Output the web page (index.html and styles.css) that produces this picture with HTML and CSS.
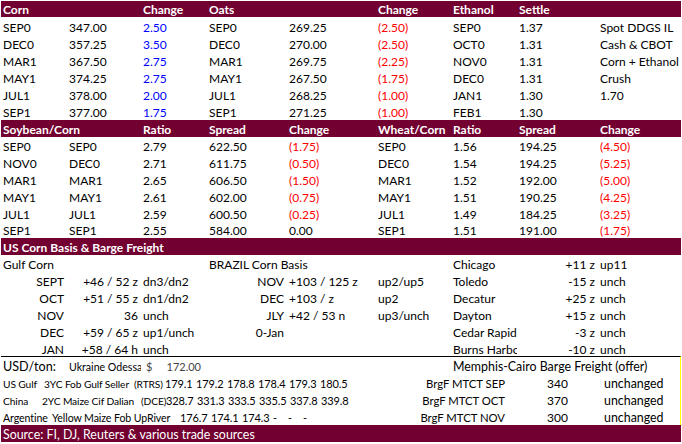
FILE: index.html
```html
<!DOCTYPE html>
<html lang="en">
<head>
<meta charset="utf-8">
<title>Grain market summary</title>
<link rel="stylesheet" href="styles.css">
</head>
<body>
<main class="sheet">
  <div class="row band first"><span class="c1">Corn</span><span class="c3">Change</span><span class="c4">Oats</span><span class="c6">Change</span><span class="c7">Ethanol</span><span class="c8">Settle</span></div>
  <div class="row tall"><span class="c1">SEP0</span><span class="c2">347.00</span><span class="c3 up">2.50</span><span class="c4">SEP0</span><span class="c5">269.25</span><span class="c6 down">(2.50)</span><span class="c7">SEP0</span><span class="c8">1.37</span><span class="c9">Spot DDGS IL</span></div>
  <div class="row"><span class="c1">DEC0</span><span class="c2">357.25</span><span class="c3 up">3.50</span><span class="c4">DEC0</span><span class="c5">270.00</span><span class="c6 down">(2.50)</span><span class="c7">OCT0</span><span class="c8">1.31</span><span class="c9">Cash &amp; CBOT</span></div>
  <div class="row"><span class="c1">MAR1</span><span class="c2">367.50</span><span class="c3 up">2.75</span><span class="c4">MAR1</span><span class="c5">269.75</span><span class="c6 down">(2.25)</span><span class="c7">NOV0</span><span class="c8">1.31</span><span class="c9">Corn + Ethanol</span></div>
  <div class="row"><span class="c1">MAY1</span><span class="c2">374.25</span><span class="c3 up">2.75</span><span class="c4">MAY1</span><span class="c5">267.50</span><span class="c6 down">(1.75)</span><span class="c7">DEC0</span><span class="c8">1.31</span><span class="c9">Crush</span></div>
  <div class="row"><span class="c1">JUL1</span><span class="c2">378.00</span><span class="c3 up">2.00</span><span class="c4">JUL1</span><span class="c5">268.25</span><span class="c6 down">(1.00)</span><span class="c7">JAN1</span><span class="c8">1.30</span><span class="c9">1.70</span></div>
  <div class="row"><span class="c1">SEP1</span><span class="c2">377.00</span><span class="c3 up">1.75</span><span class="c4">SEP1</span><span class="c5">271.25</span><span class="c6 down">(1.00)</span><span class="c7">FEB1</span><span class="c8">1.30</span></div>

  <div class="row band"><span class="c1">Soybean/Corn</span><span class="c3">Ratio</span><span class="c4">Spread</span><span class="c5">Change</span><span class="c6">Wheat/Corn</span><span class="c7">Ratio</span><span class="c8">Spread</span><span class="c9">Change</span></div>
  <div class="row"><span class="c1">SEP0</span><span class="c2">SEP0</span><span class="c3">2.79</span><span class="c4">622.50</span><span class="c5 down">(1.75)</span><span class="c6">SEP0</span><span class="c7">1.56</span><span class="c8">194.25</span><span class="c9 down">(4.50)</span></div>
  <div class="row"><span class="c1">NOV0</span><span class="c2">DEC0</span><span class="c3">2.71</span><span class="c4">611.75</span><span class="c5 down">(0.50)</span><span class="c6">DEC0</span><span class="c7">1.54</span><span class="c8">194.25</span><span class="c9 down">(5.25)</span></div>
  <div class="row"><span class="c1">MAR1</span><span class="c2">MAR1</span><span class="c3">2.65</span><span class="c4">606.50</span><span class="c5 down">(1.50)</span><span class="c6">MAR1</span><span class="c7">1.52</span><span class="c8">192.00</span><span class="c9 down">(5.00)</span></div>
  <div class="row"><span class="c1">MAY1</span><span class="c2">MAY1</span><span class="c3">2.61</span><span class="c4">602.00</span><span class="c5 down">(0.75)</span><span class="c6">MAY1</span><span class="c7">1.51</span><span class="c8">190.25</span><span class="c9 down">(4.25)</span></div>
  <div class="row"><span class="c1">JUL1</span><span class="c2">JUL1</span><span class="c3">2.59</span><span class="c4">600.50</span><span class="c5 down">(0.25)</span><span class="c6">JUL1</span><span class="c7">1.49</span><span class="c8">184.25</span><span class="c9 down">(3.25)</span></div>
  <div class="row short"><span class="c1">SEP1</span><span class="c2">SEP1</span><span class="c3">2.55</span><span class="c4">584.00</span><span class="c5">0.00</span><span class="c6">SEP1</span><span class="c7">1.51</span><span class="c8">191.00</span><span class="c9 down">(1.75)</span></div>

  <div class="row band"><span class="c1 wide">US Corn Basis &amp; Barge Freight</span></div>
  <div class="row"><span class="c1">Gulf Corn</span><span class="c4">BRAZIL Corn Basis</span><span class="c7">Chicago</span><span class="c8 r">+11 z</span><span class="c9">up11</span></div>
  <div class="row"><span class="c1 r">SEPT</span><span class="c2 r">+46 / 52 z</span><span class="c3">dn3/dn2</span><span class="c4 r">NOV</span><span class="c5">+103 / 125 z</span><span class="c6">up2/up5</span><span class="c7">Toledo</span><span class="c8 r">-15 z</span><span class="c9">unch</span></div>
  <div class="row"><span class="c1 r">OCT</span><span class="c2 r">+51 / 55 z</span><span class="c3">dn1/dn2</span><span class="c4 r">DEC</span><span class="c5">+103 / z</span><span class="c6">up2</span><span class="c7">Decatur</span><span class="c8 r">+25 z</span><span class="c9">unch</span></div>
  <div class="row"><span class="c1 r">NOV</span><span class="c2 r">36</span><span class="c3">unch</span><span class="c4 r">JLY</span><span class="c5">+42 / 53 n</span><span class="c6">up3/unch</span><span class="c7">Dayton</span><span class="c8 r">+15 z</span><span class="c9">unch</span></div>
  <div class="row"><span class="c1 r">DEC</span><span class="c2 r">+59 / 65 z</span><span class="c3">up1/unch</span><span class="c4 r">0-Jan</span><span class="c7 clip">Cedar Rapids</span><span class="c8 r">-3 z</span><span class="c9">unch</span></div>
  <div class="row"><span class="c1 r">JAN</span><span class="c2 r">+58 / 64 h</span><span class="c3">unch</span><span class="c7 clip">Burns Harbor</span><span class="c8 r">-10 z</span><span class="c9">unch</span></div>

  <section class="freight">
    <div class="row"><span class="c1 lead">USD/ton:</span><span class="c2 small clip">Ukraine Odessa</span><span class="c3 dollar"><span>$</span><span>172.00</span></span><span class="c7 lead-2">Memphis-Cairo Barge Freight (offer)</span></div>
    <div class="row"><span class="quote gulf"><span class="q-origin">US Gulf</span><span class="q-desc">3YC Fob Gulf Seller</span><span class="q-src">(RTRS)</span><span class="q-n">179.1</span><span class="q-n">179.2</span><span class="q-n">178.8</span><span class="q-n">178.4</span><span class="q-n">179.3</span><span class="q-n">180.5</span></span><span class="barge">BrgF MTCT SEP</span><span class="price">340</span><span class="c9 note">unchanged</span></div>
    <div class="row"><span class="quote china"><span class="q-origin">China</span><span class="q-desc">2YC Maize Cif Dalian</span><span class="q-src">(DCE)</span><span class="q-n">328.7</span><span class="q-n">331.3</span><span class="q-n">333.5</span><span class="q-n">335.5</span><span class="q-n">337.8</span><span class="q-n">339.8</span></span><span class="barge">BrgF MTCT OCT</span><span class="price">370</span><span class="c9 note">unchanged</span></div>
    <div class="row"><span class="quote arg"><span class="q-origin">Argentine</span><span class="q-desc">Yellow Maize Fob UpRiver</span><span class="q-n">176.7</span><span class="q-n">174.1</span><span class="q-n">174.3</span><span class="q-dash">-</span><span class="q-dash">-</span><span class="q-dash">-</span></span><span class="barge">BrgF MTCT NOV</span><span class="price">300</span><span class="c9 note">unchanged</span></div>
  </section>
  <div class="row band source"><span class="c1 wide">Source: FI, DJ, Reuters &amp; various trade sources</span></div>
</main>
</body>
</html>
```
FILE: styles.css
```css
html, body {
  margin: 0;
  padding: 0;
  background: #fff;
}
.sheet {
  width: 680px;
  margin: 1px 0 0 1px;
  font-family: Lato, "Liberation Sans", sans-serif;
  font-size: 12px;
  line-height: 14px;
  color: #000;
}
.row {
  display: grid;
  grid-template-columns: 66px 74px 66px 80px 89px 75px 66px 81px 83px;
  height: 17px;
  align-items: end;
  white-space: nowrap;
}
.row > span {
  padding-left: 2px;
  grid-row: 1;
  min-width: 0;
}
.first { height: 16px; }
.tall { height: 18px; }
.short { height: 16px; }
.band {
  background: #720030;
  color: #fff;
  font-weight: 700;
}
.source {
  font-weight: 400;
  font-size: 12.4px;
}
.c1 { grid-column: 1; }
.c2 { grid-column: 2; }
.c3 { grid-column: 3; }
.c4 { grid-column: 4; }
.c5 { grid-column: 5; }
.c6 { grid-column: 6; }
.c7 { grid-column: 7; }
.c8 { grid-column: 8; }
.c9 { grid-column: 9; }
.wide { grid-column: 1 / -1; }
.row > .r {
  padding: 0 3px 0 0;
  text-align: right;
}
.up { color: #0000ff; }
.down { color: #ff0000; }
.clip { overflow: hidden; }
.freight {
  border-top: 1px solid #000;
  border-right: 1px solid #ffff00;
  margin-top: -1px;
}
.freight .row { margin-right: -1px; }
.lead { font-size: 12.6px; }
.lead-2 { font-size: 12.4px; }
.small { font-size: 10.6px; }
.row > .dollar {
  display: flex;
  justify-content: space-between;
  width: 55px;
  padding-left: 5px;
  color: #444;
  font-size: 11px;
}
.quote {
  grid-column: 1 / 7;
  display: flex;
  font-size: 10.2px;
  letter-spacing: -0.1px;
}
.arg { font-size: 10.6px; }
.q-origin { width: 41px; }
.q-desc { width: 90px; }
.q-src { width: 31px; }
.q-n {
  width: 31px;
  font-size: 11px;
}
.q-dash { width: 15px; }
.china .q-origin { width: 39px; }
.china .q-desc { width: 99px; }
.china .q-src { width: 25px; }
.arg .q-origin { width: 49px; }
.arg .q-desc { width: 128px; }
.arg .q-dash:first-of-type { margin-left: 9px; }
.row > .barge {
  grid-column: 7 / 9;
  justify-self: end;
  padding: 0;
  margin-right: 93px;
  font-size: 11.3px;
}
.row > .price {
  grid-column: 8;
  padding-left: 30px;
}
.row > .note {
  padding-left: 6px;
  font-size: 12.4px;
}
```
